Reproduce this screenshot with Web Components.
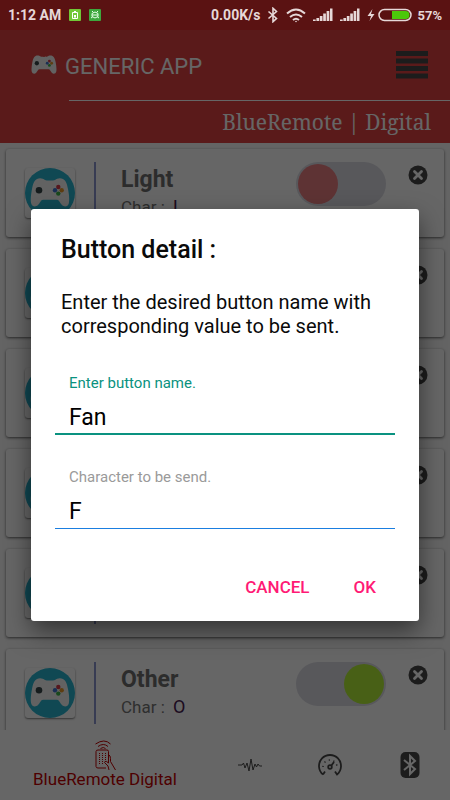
<!DOCTYPE html>
<html lang="en">
<head>
<meta charset="utf-8">
<meta name="viewport" content="width=device-width, initial-scale=1">
<title>BlueRemote Digital</title>
<style>
    body {
        margin: 0;
        font-family: Roboto, sans-serif;
    }
</style>
</head>
<body>
<remote-app>
    <remote-card name="Light" char="L"></remote-card>
    <remote-card></remote-card>
    <remote-card></remote-card>
    <remote-card></remote-card>
    <remote-card></remote-card>
    <remote-card name="Other" char="O" is-on></remote-card>
    <detail-dialog slot="dialog">
        <span slot="title">Button detail :</span>
        <span slot="message">Enter the desired button name with corresponding value to be sent.</span>
        <dialog-field label="Enter button name." value="Fan" is-active></dialog-field>
        <dialog-field label="Character to be send." value="F"></dialog-field>
    </detail-dialog>
</remote-app>

<script>
// gamepad drawing, shared by the header and the cards
const gamepad = `
    <path fill="#f5f5f5" d="M12 11c3-1.500 6-.5 8 1 1.500.8 8.500.8 10 0 2-1.500 5-2.500 8-1 3 1.500 4 5 5 10 1 5 1.700 11 .8 14.500-.8 3-4.300 4-6.800 1.500-2-2-2.800-5.300-5-5.300H18c-2.200 0-3 3.300-5 5.300-2.500 2.500-6 1.500-6.800-1.500-.9-3.500-.2-9.500.8-14.500 1-5 2-8.500 5-10z"/>
    <circle cx="14" cy="22.300" r="3.300" fill="#37474a"/>
    <circle cx="33.300" cy="19" r="2.200" fill="#d83a4a"/>
    <circle cx="30" cy="22.300" r="2.200" fill="#3f74cf"/>
    <circle cx="36.700" cy="22.300" r="2.200" fill="#e89a2c"/>
    <circle cx="33.300" cy="25.600" r="2.200" fill="#3fb54a"/>`;

const signal = `
    <svg width="20" height="14" viewBox="0 0 20 14" fill="currentColor"><path d="M0 11.500h2.700V13H0zM3.400 10h2.700v3H3.400zM6.800 8h2.700v5H6.800zM10.200 5.500h2.700V13h-2.700zM13.600 3h2.700v10h-2.700zM17 .5h2.500V13H17z"/></svg>`;

class StatusBar extends HTMLElement {
    connectedCallback() {
        this.attachShadow({ mode: "open" }).innerHTML = `
            <style>
            :host {
                display: flex;
                flex: none;
                align-items: center;
                height: 30px;
                padding: 0 8px;
                background: #5a1212;
                color: #e6d8d8;
                font-size: 14px;
                font-weight: 700;
            }
            .left, .right { display: flex; align-items: center; gap: 8px; }
            .right { margin-left: auto; gap: 7px; }
            .battery { display: flex; align-items: center; gap: 3px; }
            .percent { font-size: 13px; margin-left: 2px; }
            svg { display: block; }
            </style>
            <div class="left">
                <span>1:12 AM</span>
                <svg width="12" height="12" viewBox="0 0 12 12"><rect width="12" height="12" rx="1" fill="#72c837"/><path fill="none" stroke="#fff" d="M3.500 3.500h5v6h-5z"/><path fill="#fff" d="M5 2h2v1.500H5zM5 6h2v2.500H5z"/></svg>
                <svg width="12" height="12" viewBox="0 0 12 12"><rect width="12" height="12" rx="1" fill="#3da73d"/><path fill="none" stroke="#e8ffe8" d="M3 4.500q3-3 6 0v3q-3 3-6 0zM3 6h6M3 2l1.500 1.500M9 2 7.500 3.500M2 9l1.500-1M10 9 8.500 8"/></svg>
            </div>
            <div class="right">
                <span>0.00K/s</span>
                <svg width="12" height="16" viewBox="0 0 12 16" fill="none" stroke="currentColor" stroke-width="1.600"><path d="m1.500 4.500 8 7L6 14.700V1.300l3.500 3.200-8 7"/></svg>
                <svg width="20" height="15" viewBox="0 0 20 15" fill="none" stroke="currentColor" stroke-width="2"><path d="M1 5.500q9-8 18 0M4 9q6-5 12 0M7 12q3-2.500 6 0"/><circle cx="10" cy="13.500" r=".8" fill="currentColor" stroke="none"/></svg>
                ${signal}
                ${signal}
                <div class="battery">
                    <svg width="8" height="12" viewBox="0 0 8 12" fill="currentColor"><path d="M5.500 0 .5 7H4l-1.500 5L7.500 5H4z"/></svg>
                    <svg width="34" height="14" viewBox="0 0 34 14"><rect x="1" y="1.500" width="32" height="11" rx="5.500" fill="none" stroke="currentColor" stroke-width="1.500"/><path d="M14 3h13.500a4 4 0 0 1 0 8H14z" fill="#4cc80a"/></svg>
                    <span class="percent">57%</span>
                </div>
            </div>`;
    }
}
customElements.define("status-bar", StatusBar);

class AppHeader extends HTMLElement {
    connectedCallback() {
        this.attachShadow({ mode: "open" }).innerHTML = `
            <style>
            :host {
                display: block;
                flex: none;
                background: #e24242;
                color: #fff;
            }
            .top {
                display: flex;
                align-items: center;
                gap: 8px;
                height: 70px;
                padding: 0 22px 0 31px;
                box-sizing: border-box;
            }
            h1 { margin: 0; padding-top: 3px; font-size: 22px; font-weight: 400; line-height: 28px; }
            button { margin-left: auto; padding: 0; border: 0; background: none; }
            svg { display: block; }
            .subtitle {
                margin-left: 69px;
                padding-right: 19px;
                border-top: 1px solid #fff;
                font-family: "Noto Serif", "DejaVu Serif", serif;
                font-size: 21px;
                line-height: 42px;
                text-align: right;
            }
            </style>
            <div class="top">
                <svg width="26" height="20" viewBox="5 10 40 30" aria-hidden="true">${gamepad}</svg>
                <h1>GENERIC APP</h1>
                <button aria-label="Menu">
                    <svg width="32" height="28" viewBox="0 0 32 28" fill="#484848"><path d="M0 0h32v5H0zM0 7.500h32v5H0zM0 15h32v5H0zM0 22.500h32v5H0z"/></svg>
                </button>
            </div>
            <div class="subtitle">BlueRemote | Digital</div>`;
    }
}
customElements.define("app-header", AppHeader);

class RemoteCard extends HTMLElement {
    connectedCallback() {
        const name = this.getAttribute("name") ?? "";
        const char = this.getAttribute("char");

        this.attachShadow({ mode: "open" }).innerHTML = `
            <style>
            :host {
                display: flex;
                flex: none;
                align-items: flex-start;
                box-sizing: border-box;
                height: 88px;
                padding: 13px 16px 13px 19px;
                border-radius: 3px;
                background: #fff;
                box-shadow: 0 1px 3px rgba(0, 0, 0, .6);
            }
            .icon {
                display: block;
                margin-top: 6px;
                border-radius: 3px;
                box-shadow: 0 1px 2px rgba(0, 0, 0, .5);
            }
            .text {
                flex: 1;
                margin-left: 19px;
                padding-left: 25px;
                height: 62px;
                border-left: 2px solid #8c96d0;
                color: #757575;
            }
            h2 { margin: 0; font-size: 23px; line-height: 36px; font-weight: 700; color: #6f6f6f; }
            p { margin: 0; font-size: 17px; line-height: 18px; }
            b { margin-left: 4px; font-size: 18px; font-weight: 400; color: #4a2050; }
            input {
                appearance: none;
                display: flex;
                align-items: center;
                box-sizing: border-box;
                width: 90px;
                height: 44px;
                margin: 0 22px 0 0;
                padding: 2px;
                border-radius: 22px;
                background: #dcdce4;
            }
            input::before {
                content: "";
                width: 40px;
                height: 40px;
                border-radius: 20px;
                background: #eb7f83;
            }
            input:checked { justify-content: flex-end; }
            input:checked::before { background: #b4f038; }
            button { margin: 3px 0 0; padding: 0; border: 0; background: none; }
            button svg { display: block; }
            </style>
            <svg class="icon" width="50" height="50" viewBox="0 0 50 50" aria-hidden="true">
                <circle cx="25" cy="25" r="25" fill="#28b4d0"/>${gamepad}
            </svg>
            <div class="text"></div>
            <input type="checkbox" role="switch">
            <button aria-label="Remove">
                <svg width="20" height="20" viewBox="0 0 20 20"><circle cx="10" cy="10" r="9.500" fill="#484848"/><path d="m6.500 6.500 7 7m0-7-7 7" stroke="#fff" stroke-width="2.800" stroke-linecap="round"/></svg>
            </button>`;

        const toggle = this.shadowRoot.querySelector("input");
        toggle.checked = this.hasAttribute("is-on");
        toggle.setAttribute("aria-label", name || "Button");

        if (name) {
            this.shadowRoot.querySelector(".text").innerHTML = `<h2>${name}</h2><p>Char : <b>${char}</b></p>`;
        }
        this.shadowRoot.querySelector("button").addEventListener("click", () => this.remove());
    }
}
customElements.define("remote-card", RemoteCard);

class BottomNav extends HTMLElement {
    connectedCallback() {
        this.attachShadow({ mode: "open" }).innerHTML = `
            <style>
            :host {
                display: block;
                flex: none;
                background: #fff;
            }
            nav {
                display: grid;
                grid-template-columns: 1fr 80px 80px 80px;
                height: 70px;
            }
            a {
                display: flex;
                flex-direction: column;
                align-items: center;
                justify-content: center;
                color: #484848;
                font-size: 17px;
                line-height: 18px;
                text-decoration: none;
            }
            a.active { padding-bottom: 2px; color: #c40000; }
            svg { display: block; fill: none; stroke: currentColor; }
            </style>
            <nav>
                <a class="active" href="#digital">
                    <svg width="24" height="30" viewBox="0 1 24 30">
                        <path d="M2.500 5q9-6 15 0M5 7.500q5.500-4 10 0M7.500 9.500q3-2 5 0"/>
                        <path d="M15.500 24V12.500q0-1.500-1.500-1.500H5q-2 0-2 1.500v15Q3 29 5 29h8"/>
                        <path stroke-dasharray="1 1" d="M6.500 14v11M9.500 14v11M12.500 14v9"/>
                        <path d="M15.500 15.500q2 1 2 4v3l5 8.500M16 31l-1-4-3.500-3.500q0-1.500 2-1l2 1.500"/>
                    </svg>
                    BlueRemote Digital
                </a>
                <a href="#wave" aria-label="Wave">
                    <svg width="24" height="14" viewBox="0 0 24 14"><path d="M0 7h4l1.500-2L7 10l2-5 2 8 2-12 2 11 2-6 1.500 3 1.500-3 1.500 2H24"/></svg>
                </a>
                <a href="#gauge" aria-label="Gauge">
                    <svg width="26" height="24" viewBox="0 0 26 24" stroke-width="1.800"><path d="M6 21.500l2-3M6 21.500a11 11 0 1 1 14 0l-2-3"/><path stroke-width="1.500" stroke-dasharray="1.200 3.600" d="M6 14a7 7 0 0 1 14 0"/><circle cx="13" cy="14" r="1.800"/><path d="m14 13 3-4"/></svg>
                </a>
                <a href="#bluetooth" aria-label="Bluetooth">
                    <svg width="20" height="26" viewBox="0 0 20 26"><rect width="19" height="26" x=".5" rx="5" fill="currentColor" stroke="none"/><path stroke="#fff" stroke-width="2" d="m4 8 11 9-5 5V4l5 5-11 9"/></svg>
                </a>
            </nav>`;
    }
}
customElements.define("bottom-nav", BottomNav);

class DialogField extends HTMLElement {
    connectedCallback() {
        this.attachShadow({ mode: "open" }).innerHTML = `
            <style>
            :host { display: block; color: #9a9a9a; }
            :host([is-active]) { color: #0a9280; }
            label {
                display: block;
                padding: 0 14px;
                font-size: 15px;
                line-height: 20px;
            }
            input {
                display: block;
                box-sizing: border-box;
                width: 100%;
                height: 42px;
                padding: 8px 14px 0;
                border: 0;
                border-bottom: 1px solid #1a7ee0;
                outline: none;
                background: none;
                color: #000;
                font: 23px Roboto, sans-serif;
            }
            :host([is-active]) input { border-bottom: 2px solid #0a9280; }
            </style>
            <label for="field"></label>
            <input id="field" type="text">`;

        this.shadowRoot.querySelector("label").textContent = this.getAttribute("label");
        this.shadowRoot.querySelector("input").value = this.getAttribute("value") ?? "";
    }
}
customElements.define("dialog-field", DialogField);

class DetailDialog extends HTMLElement {
    connectedCallback() {
        this.attachShadow({ mode: "open" }).innerHTML = `
            <style>
            /* the scrim lies over the whole app */
            :host {
                position: absolute;
                inset: 0;
                display: flex;
                align-items: center;
                justify-content: center;
                padding: 0 31px;
                background: rgba(0, 0, 0, .6);
            }
            section {
                flex: 1;
                max-width: 480px;
                box-sizing: border-box;
                padding: 24px 24px 14px;
                border-radius: 3px;
                background: #fff;
                color: #0a0a0a;
                box-shadow: 0 10px 24px rgba(0, 0, 0, .5);
            }
            h2 { margin: 0 6px; font-size: 25px; line-height: 34px; font-weight: 500; }
            p { margin: 23px 6px 35px; font-size: 20px; line-height: 24px; }
            .fields { display: grid; gap: 32px; }
            .actions { display: flex; justify-content: flex-end; gap: 12px; margin-top: 38px; padding-right: 3px; }
            button {
                padding: 0 16px;
                border: 0;
                background: none;
                color: #ff1a75;
                font: 500 17px/40px Roboto, sans-serif;
            }
            </style>
            <section role="dialog" aria-labelledby="title">
                <h2 id="title"><slot name="title"></slot></h2>
                <p><slot name="message"></slot></p>
                <div class="fields"><slot></slot></div>
                <div class="actions">
                    <button>CANCEL</button>
                    <button>OK</button>
                </div>
            </section>`;

        this.shadowRoot.querySelectorAll("button").forEach((button) => {
            button.addEventListener("click", () => this.remove());
        });
    }
}
customElements.define("detail-dialog", DetailDialog);

class RemoteApp extends HTMLElement {
    connectedCallback() {
        this.attachShadow({ mode: "open" }).innerHTML = `
            <style>
            :host {
                display: flex;
                flex-direction: column;
                height: 100vh;
            }
            .screen {
                position: relative;
                display: flex;
                flex: 1;
                flex-direction: column;
                min-height: 0;
            }
            main {
                display: flex;
                flex: 1;
                flex-direction: column;
                gap: 12px;
                min-height: 0;
                padding: 6px 6px 0;
                overflow: hidden;
                background: #fafafa;
            }
            </style>
            <status-bar></status-bar>
            <div class="screen">
                <app-header></app-header>
                <main><slot></slot></main>
                <bottom-nav></bottom-nav>
                <slot name="dialog"></slot>
            </div>`;
    }
}
customElements.define("remote-app", RemoteApp);
</script>
</body>
</html>
